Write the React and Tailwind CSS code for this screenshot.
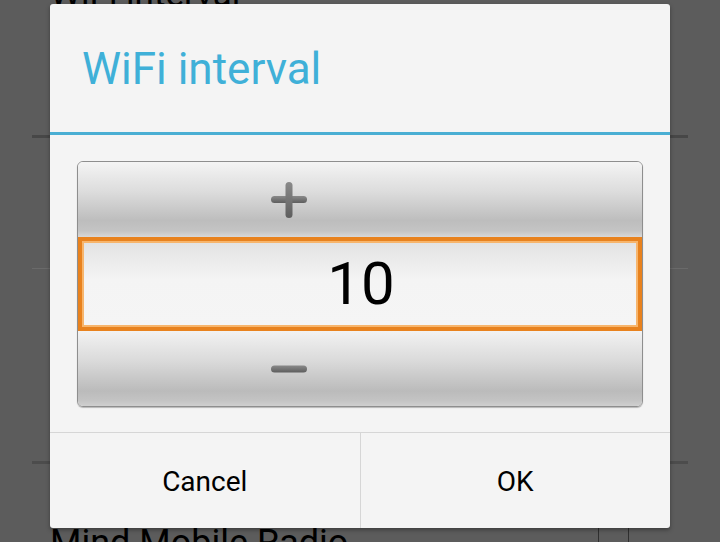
import React, { useState } from "react";

const font = { fontFamily: "Roboto, 'Noto Sans', sans-serif" };

const PlusIcon = () => (
  <svg width="38" height="38" viewBox="0 0 38 38">
    <defs>
      <linearGradient id="pg" x1="0" y1="0" x2="0" y2="1">
        <stop offset="0" stopColor="#8a8a8a" />
        <stop offset="1" stopColor="#5e5e5e" />
      </linearGradient>
    </defs>
    <rect x="1" y="15" width="36" height="7" rx="3.5" fill="url(#pg)" />
    <rect x="15.5" y="1" width="7" height="36" rx="3.5" fill="url(#pg)" />
  </svg>
);

const MinusIcon = () => (
  <svg width="38" height="10" viewBox="0 0 38 10">
    <defs>
      <linearGradient id="mg" x1="0" y1="0" x2="0" y2="1">
        <stop offset="0" stopColor="#8a8a8a" />
        <stop offset="1" stopColor="#5e5e5e" />
      </linearGradient>
    </defs>
    <rect x="1" y="1.5" width="36" height="7" rx="3.5" fill="url(#mg)" />
  </svg>
);

export default function App() {
  const [value, setValue] = useState(10);

  return (
    <div className="relative w-[720px] h-[542px] overflow-hidden bg-[#5c5c5c]" style={font}>
      {/* dimmed settings list behind the dialog */}
      <div className="flex flex-col">
        <div className="h-[135px] px-[50px]">
          <div className="mt-[-26px] text-[35px] leading-[42px] text-black">WiFi interval</div>
        </div>
        <div className="mx-[32px] h-[3px] bg-[#474747]"></div>
        <div className="h-[130px]"></div>
        <div className="mx-[32px] h-px bg-[#6a6a6a]"></div>
        <div className="h-[192px]"></div>
        <div className="mx-[32px] h-[3px] bg-[#4c4c4c]"></div>
        <div className="flex h-[80px] items-end">
          <div className="flex-1 pl-[50px] text-[36px] leading-[42px] text-black mb-[-20px]">Mind Mobile Radio</div>
          <div className="h-[80px] w-[31px] border-x border-[#2f2f2f] mr-[91px]"></div>
        </div>
      </div>

      {/* dialog */}
      <div className="absolute left-[50px] top-[4px] w-[620px] h-[524px] flex flex-col rounded-[3px] bg-[#f4f4f4] shadow-[0_2px_4px_rgba(0,0,0,0.35)]">
        <div className="h-[128px] flex items-center pl-[32px]">
          <h1 className="text-[44px] text-[#3fb0d8] pt-[2px]">WiFi interval</h1>
        </div>
        <div className="h-[3px] bg-[#4aaed3]"></div>

        <div className="h-[297px] px-[27px] pt-[26px]">
          <div className="flex flex-col h-[246px] rounded-[6px] border border-[#8e8e8e] overflow-hidden shadow-[0_1px_1px_rgba(0,0,0,0.25)]">
            <button
              onClick={() => setValue((v) => v + 1)}
              className="h-[75px] flex items-center pl-[192px] bg-[linear-gradient(to_bottom,#f4f4f4_0%,#dcdcdc_40%,#bdbdbd_78%,#c4c4c4_92%,#d8d8d8_100%)]"
            >
              <PlusIcon />
            </button>
            <div className="h-[94px] border-[4px] border-[#e8821e] bg-[linear-gradient(to_bottom,#e2e2e2_0%,#f4f4f4_45%,#f5f5f5_100%)] shadow-[inset_0_0_0_2px_#f7b56c] flex items-center justify-center">
              <span className="text-[60px] leading-none text-black pl-[2px]">{value}</span>
            </div>
            <button
              onClick={() => setValue((v) => Math.max(0, v - 1))}
              className="flex-1 flex items-center pl-[192px] bg-[linear-gradient(to_bottom,#f2f2f2_0%,#dadada_40%,#bbbbbb_80%,#c3c3c3_92%,#cfcfcf_100%)]"
            >
              <MinusIcon />
            </button>
          </div>
        </div>

        <div className="h-px bg-[#d6d6d6]"></div>
        <div className="flex flex-1">
          <button className="flex-1 flex items-center justify-center text-[28px] text-black pt-[2px]">Cancel</button>
          <div className="w-px bg-[#d6d6d6]"></div>
          <button className="flex-1 flex items-center justify-center text-[28px] text-black pt-[2px]">OK</button>
        </div>
      </div>
    </div>
  );
}
